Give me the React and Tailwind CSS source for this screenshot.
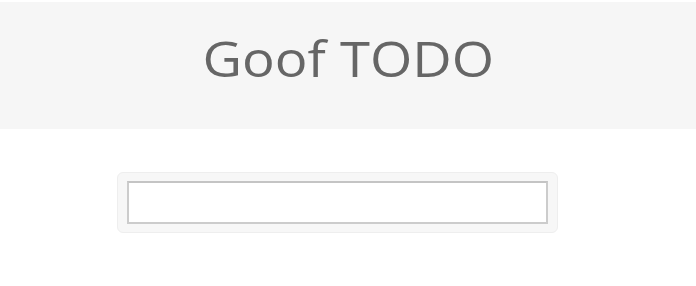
export default function App() {
  return (
    <div className="min-h-[286px] bg-white" style={{ fontFamily: '"Open Sans", "Liberation Sans", sans-serif' }}>
      <header className="mt-[2px] flex h-[127px] items-start justify-center bg-[#f6f6f6] pt-[32px]">
        <h1 className="scale-x-[1.11] text-[49px] font-normal leading-none text-[#666666]">Goof TODO</h1>
      </header>

      <div className="ml-[117px] mt-[43px] w-[441px] rounded-[6px] border border-[#eeeeee] bg-[#f7f7f7] px-[9px] py-[8px]">
        <input
          type="text"
          className="block h-[43px] w-full border-2 border-[#cccccc] border-t-[#c4c4c4] bg-white px-2 text-base text-[#555555] outline-none"
        />
      </div>
    </div>
  );
}
